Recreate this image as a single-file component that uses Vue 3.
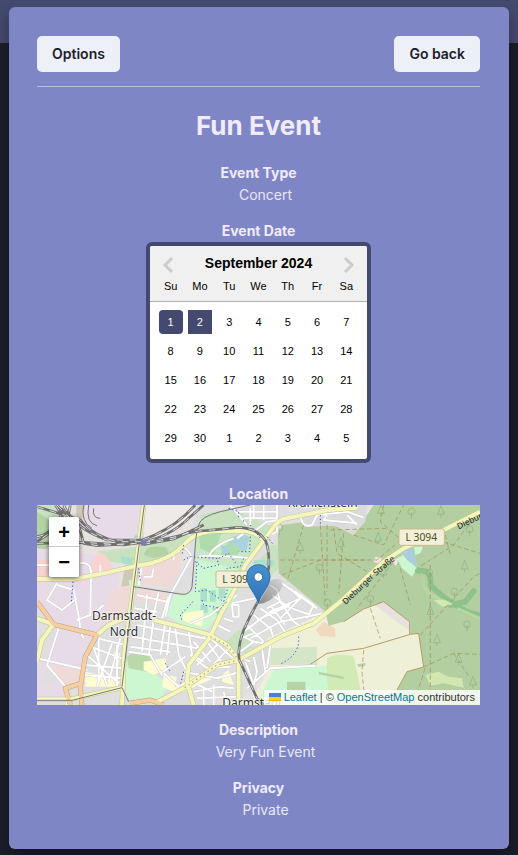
<script setup>
const weekdays = ['Su', 'Mo', 'Tu', 'We', 'Th', 'Fr', 'Sa']
const days = Array.from({ length: 35 }, (_, i) => ({
  n: i < 30 ? i + 1 : i - 29,
  start: i === 0,
  end: i === 1,
}))

// Map geometry lives on a 1329 x 600 plane.
const land = [
  { fill: '#e0dfdf', d: 'M262 240L390 250L450 170L480 0H960L960 90L870 60L800 70L720 60L722 200L870 320L690 400L700 480L600 600H0V300L200 330Z' },
  { fill: '#eeeae8', d: 'M325 0H480L440 60L380 95L320 110Z' },
  { fill: '#c8e2c0', d: 'M0 0H55L110 30V110H0ZM180 140L300 125L440 85L470 100L400 165L300 180L215 170Z' },
  { fill: '#b3d3a4', d: 'M0 20L60 60L50 110L0 160ZM330 130Q350 120 390 128L395 150L350 160L320 150Z' },
  { fill: '#cfc8b4', d: 'M118 0H150L140 50L118 40ZM265 180H305V250H252Z' },
  { fill: '#e8dbe8', d: 'M145 0H322L308 115H240L180 90L130 60ZM0 130L190 150L250 210L240 260L250 330L200 370L150 390L60 360L0 300Z' },
  { fill: '#e8dbe8', d: 'M60 370L175 390L145 440L135 530L80 520L30 490L0 560V470L20 465Z' },
  { fill: '#e8dbe8', d: 'M0 540L60 530L90 550V590H0Z' },
  { fill: '#f8d3d0', d: 'M0 165H35V220H130L180 218L225 205Q230 160 185 140L165 170L150 240L60 240L45 270L65 370L0 300Z' },
  { fill: '#e8dbe8', d: 'M50 180H150L160 210H50ZM10 230H160V340H130L60 360L0 290V235Z' },
  { fill: '#f0dad8', d: 'M225 250L285 240L265 340L190 360ZM310 180L435 135L430 200L400 250L300 230ZM30 480L130 490L130 535L80 540ZM300 245L395 268L390 300L300 290Z' },
  { fill: '#cdf7d0', d: 'M480 160L620 150L600 200L590 300L550 320L510 375L440 365L390 330L410 270L470 260Z' },
  { fill: '#c8e9c3', d: 'M480 80L640 70L700 100L610 195L470 160Z' },
  { fill: '#c8e2c0', d: 'M490 30L580 10L720 70L690 100L640 65L490 75ZM690 120H722L725 190L705 210L640 190L690 140ZM605 375L650 380L640 450L600 440L565 410Z' },
  { fill: '#aedcac', d: 'M485 90L555 80L530 150L490 130ZM580 100Q620 80 640 100L600 150H550ZM525 310L565 300L550 340Z' },
  { fill: '#cdf7d0', d: 'M275 450L330 440L345 500L400 540L370 580L270 580L262 500ZM275 225L305 228V250H280Z' },
  { fill: '#b9d9ab', d: 'M270 455Q300 430 340 455L360 475L330 500L275 490Z' },
  { fill: '#aae0cb', d: 'M490 250H510V290H490ZM518 256H536V290H518ZM545 250H565V280H545ZM490 300H512V325H490ZM650 165H710V185H650ZM250 152L290 160L280 180L255 175Z' },
  { fill: '#aad3df', d: 'M550 125Q565 115 578 130L570 146L555 142ZM583 100Q610 80 635 95L630 135L615 140L600 120L590 125ZM295 90L320 95L315 100L290 98Z' },
  { fill: '#fdfcd0', d: 'M440 325L500 315L495 365L460 355L435 345ZM320 470L385 460L390 490L350 510L320 495ZM380 510L420 515L410 560L375 545ZM145 500L190 510L250 530L240 545H145ZM755 395H785V425H755ZM560 505L575 495L590 540L555 530ZM230 440L250 445L245 485L228 480ZM400 555L470 515L530 520L440 560Z' },
  { fill: '#eef0d8', d: 'M690 400L870 320L1000 290L1120 380L1330 480V600H640L700 480Z' },
  { fill: '#dcdbdb', d: 'M640 430L695 410L700 485L640 560L610 470Z' },
  { fill: '#d5e5c8', d: 'M700 430L840 425V480H700Z' },
  { fill: '#cdf7d0', d: 'M715 490L900 482L940 510V600H660L690 530Z' },
  { fill: '#d2eab4', d: 'M870 460Q900 440 950 455L960 500L980 600H880L870 520Z' },
  { fill: '#b4d4a8', d: 'M845 500L920 515V523L845 508ZM750 530H805V558H750ZM760 565H860V575H760ZM960 478L985 474V482L965 486Z' },
  { fill: '#f1d9bf', d: 'M837 375L860 350L895 370V395L850 393Z' },
  { fill: '#b3cfa1', d: 'M1010 0H1329V600H990L1080 555L1110 500L1160 486L1145 385L1120 388V350L1040 290L980 312L920 350L875 362L865 320L725 205L722 90L735 60L800 52Q850 55 900 65L950 90Z' },
  { fill: '#dcdbdb', d: 'M790 30L850 0H990L985 50L950 88L900 62L800 65Z' },
  { fill: '#cdf7d0', d: 'M1080 160L1100 150L1140 190L1125 215L1095 190ZM1130 125L1158 125L1150 145L1135 150Z' },
  { fill: '#aacfda', d: 'M1090 140L1120 122L1135 150L1142 188L1110 165Z' },
  { fill: '#eee4e0', d: 'M1015 155L1035 160L1028 178L1010 170ZM1060 165L1085 160L1078 184Z' },
  { fill: '#d1e7af', d: 'M1165 510L1205 500L1235 515L1275 520L1280 548L1220 535L1180 542Z' },
]
const whiteRoads = [
  'M105 220V130M0 180H40M128 175Q160 170 162 200L160 330L120 345M60 235L30 285L75 315L120 280M62 240L110 255L125 335L130 370',
  'M65 370L30 480L90 550V600M0 460L150 495M190 215V180M200 300L165 330M128 375L140 400M180 400L265 420',
  'M315 180L305 240M350 190L345 215H320M410 165V140M430 120Q465 140 462 160L400 270L385 335',
  'M395 275L375 340M415 370L425 450L450 500M455 380L465 450L500 470M370 505L445 455M380 505L430 550M375 510L340 450L275 440M510 490L580 485',
  'M300 270L390 290M290 310L360 320M300 360L500 400M285 395L480 430M280 425L400 440M330 270L315 440M350 345L335 450M385 350L370 450M365 260L350 330M400 360L390 450',
  'M145 480L260 490M140 510L255 520M165 415L210 540M225 415L180 545M150 450L245 535M160 425L255 460M185 395V530M240 420V545M250 400L215 530',
  'M470 410L520 470M500 395L560 480M540 420L480 480M580 425L500 510M520 400L600 470M460 450L510 490M440 500L540 520L610 500M475 535L525 560',
  'M470 560L550 545L590 550M480 580L600 575M500 545V600M530 540V600M560 560L570 600M640 540L660 600',
  'M585 300H605V335H588ZM585 295L655 280M610 400L650 385M560 340L590 350M540 360L580 380',
  'M700 240L720 255L730 290L690 310M735 235L840 310M760 250L790 280L760 310M775 260L830 300L810 340M670 310L720 345L750 390M700 300L745 360M650 330L700 370L710 400M630 360L680 410M620 395L660 415M730 290L770 350L800 370M765 310L820 330M690 250L665 290M705 270L760 310L730 340M640 400L730 350L860 325M620 380L700 320L790 280M660 345L760 300',
  'M625 470L650 540M650 455L660 500L650 540M675 430L685 500M700 420L690 490M630 550L700 490L835 482M600 455L640 470M610 440L650 410L680 415',
  'M720 0V80L700 90M605 20H720M620 40H720M650 0V40M680 0V45M640 10V60M580 0L630 60M650 80L690 50L730 45',
  'M790 30Q795 70 825 60L840 30L930 20L980 38M870 30L860 45L960 55M930 30L960 60',
  'M480 155Q540 150 640 160M515 155Q530 120 590 100M620 85L600 100M460 355L520 330L600 270',
]
const yellowRoads = [
  'M0 222H110L200 205L300 182Q400 170 450 110Q480 80 540 78H610Q650 75 680 105',
  'M320 0L290 240L262 440L255 600',
  'M180 390L215 360L262 340M350 345L450 370L520 390L570 420L605 465V600',
  'M48 360L15 405L0 470M0 340L50 358',
  'M960 8L870 16L750 40Q725 40 700 80L625 180L590 260L555 320L520 395L455 480L450 530L470 600',
  'M1329 20L1220 75L1100 130L1040 170L910 290L830 355L730 395L605 465L540 480L440 550L360 592',
  'M0 583H100L255 548',
]
const orangeRoads = ['M0 290L50 358L180 390L145 455L130 545L135 600', 'M130 535L85 550L100 600', 'M280 595L340 585L380 600']
const rails = [
  'M55 0L75 30L110 50M0 5L130 45Q165 90 240 110H320Q400 95 460 35L500 0',
  'M80 0Q110 70 210 105H315Q390 80 445 30L475 0',
  'M0 115L140 112L260 120L370 105L430 92Q450 80 515 76L605 67Q665 70 687 110Q698 140 695 190L662 292Q640 330 620 375Q600 430 607 465L660 580L680 600',
  'M0 95Q40 90 70 35L85 0M60 0L120 60M100 0L90 50L0 110M125 60L140 115L180 122L290 115',
  'M320 118L410 102L500 60',
]
const thinRails = [
  'M640 0L550 20Q490 35 485 60Q478 80 475 120L465 245Q460 270 435 268L290 245',
  'M322 0L290 245L255 545M0 586H105L255 548L275 590',
  'M140 0Q130 50 165 70M155 0Q145 55 180 62M170 10Q165 40 190 40',
]
const waterDots = [
  'M440 165L460 155L540 160L545 180L500 190L475 170M640 95L638 140L605 140M575 10L605 20L605 40M480 170L475 260L510 255L560 290L575 240L570 190L610 185L620 160M545 160L575 145L600 180M468 290L430 330L435 345M495 285L500 300L550 310L570 290',
  'M785 395Q790 450 730 477M108 230L103 290M440 120L435 150M305 190L310 230M385 475L400 500M440 500L430 540M690 95L710 120M620 50V40M850 30V60M640 60L670 100',
]
const tracks = [
  'M735 210L850 165L1020 165L1120 80L1329 145M870 60V260M730 165H985M850 60L865 290M800 60L750 230M920 85L905 265M990 200L900 145L890 70M950 90L1040 120L1100 0M1040 0L1030 50L1110 120M880 75L1050 70',
  'M980 435L975 500L985 600M1000 310L1030 400M1180 180V600M1150 390L1310 215L1329 205M1160 486L1250 445L1329 448M1164 490L1130 600M1320 25L1250 120L1140 190M1090 190L1120 300M1070 170L960 310M1225 90L1240 150M1250 445L1300 520',
]
const paths = ['M820 478L870 445L980 430L1120 388L1145 385', 'M920 350L980 312L1040 290L1118 350V388M1145 385L1160 486L1110 500L1080 555']
const trees = [[1032, 15], [1212, 18], [1023, 98], [912, 115], [790, 127], [1040, 200], [1283, 182], [1180, 318], [1200, 403], [1265, 462], [1308, 530]]
const roundTrees = [[1123, 22], [1298, 75], [847, 190], [1000, 283], [1177, 205], [1252, 262], [1290, 360], [727, 70], [871, 295]]
</script>

<template>
  <div class="page">
    <main class="card">
      <header class="toolbar">
        <button type="button" class="btn">Options</button>
        <button type="button" class="btn">Go back</button>
      </header>
      <h1>Fun Event</h1>

      <section class="field">
        <h2>Event Type</h2>
        <p>Concert</p>
      </section>

      <section class="field date">
        <h2>Event Date</h2>
        <div class="calendar">
          <div class="cal-head">
            <div class="month">
              <button type="button" class="nav" aria-label="Previous month">
                <svg width="12" height="18" viewBox="0 0 12 18"><path d="M10 2L3 9L10 16" /></svg>
              </button>
              <strong>September 2024</strong>
              <button type="button" class="nav" aria-label="Next month">
                <svg width="12" height="18" viewBox="0 0 12 18"><path d="M2 2L9 9L2 16" /></svg>
              </button>
            </div>
            <div class="week">
              <span v-for="w in weekdays" :key="w">{{ w }}</span>
            </div>
          </div>
          <div class="days">
            <button v-for="(d, i) in days" :key="i" type="button" class="day" :class="{ start: d.start, end: d.end }">{{ d.n }}</button>
          </div>
        </div>
      </section>

      <section class="field location">
        <h2>Location</h2>
        <div class="map">
          <svg class="tiles" viewBox="0 0 1329 600" preserveAspectRatio="xMidYMid slice">
            <rect width="1329" height="600" fill="#e6e2e0" />
            <path v-for="a in land" :key="a.d" :d="a.d" :fill="a.fill" />
            <path d="M1142 198Q1185 190 1180 240Q1215 275 1255 300Q1290 325 1329 330M1310 258L1285 290L1240 300" fill="none" stroke="#8fc18a" stroke-width="17" stroke-linecap="round" />
            <path d="M1158 215Q1155 260 1190 275L1245 298M1260 310L1329 340" fill="none" stroke="#b5d7a0" stroke-width="9" />
            <path d="M1190 285Q1230 280 1245 298L1215 305Z" fill="#cfeab2" />

            <g fill="none" stroke-linejoin="round">
              <path v-for="d in tracks" :key="d" :d="d" stroke="#a8894f" stroke-width="2" stroke-dasharray="14 8" />
              <path v-for="d in paths" :key="d" :d="d" stroke="#b99a62" stroke-width="3" />
              <g stroke="#8fae80" stroke-width="2">
                <path v-for="[x, y] in trees" :key="`${x}-${y}`" :d="`M${x} ${y - 16}L${x + 10} ${y + 10}H${x - 10}ZM${x} ${y + 10}V${y + 20}`" />
                <g v-for="[x, y] in roundTrees" :key="`${x}-${y}`">
                  <circle :cx="x" :cy="y - 2" r="10" /><path :d="`M${x} ${y}V${y + 20}`" />
                </g>
              </g>
              <path v-for="d in whiteRoads" :key="d" :d="d" stroke="#c9c7c8" stroke-width="8" />
              <path v-for="d in whiteRoads" :key="`f${d}`" :d="d" stroke="#ffffff" stroke-width="6" />
              <path v-for="d in yellowRoads" :key="d" :d="d" stroke="#c3c493" stroke-width="15" />
              <path v-for="d in orangeRoads" :key="d" :d="d" stroke="#cca06d" stroke-width="15" />
              <path v-for="d in yellowRoads" :key="`f${d}`" :d="d" stroke="#f5f6bb" stroke-width="12" />
              <path v-for="d in orangeRoads" :key="`f${d}`" :d="d" stroke="#f2cfa5" stroke-width="12" />
              <path v-for="d in thinRails" :key="d" :d="d" stroke="#777777" stroke-width="3" />
              <path v-for="d in rails" :key="d" :d="d" stroke="#707070" stroke-width="8" />
              <path v-for="d in rails" :key="`f${d}`" :d="d" stroke="#dddddd" stroke-width="3" stroke-dasharray="20 20" />
              <path v-for="d in waterDots" :key="d" :d="d" stroke="#3c49e8" stroke-width="3" stroke-dasharray="4 7" />
              <path d="M520 395L570 420L605 465L540 480L440 550" stroke="#c59d8c" stroke-width="4" stroke-dasharray="4 10" />
            </g>
            <rect x="311" y="104" width="18" height="18" fill="#7b7bb5" />

            <g class="shield">
              <rect x="1086" y="72" width="136" height="49" rx="6" /><text x="1153" y="109">L 3094</text>
              <rect x="537" y="198" width="136" height="49" rx="6" /><text x="603" y="234">L 3094</text>
            </g>
            <g class="place">
              <text x="261" y="346">Darmstadt-</text>
              <text x="261" y="392">Nord</text>
              <text x="857" y="6">Kranichstein</text>
              <text x="646" y="605">Darmstadt</text>
            </g>
            <path id="street" d="M922 296L1004 216L1090 144" fill="none" />
            <path id="street-east" d="M1263 68L1410 -4" fill="none" />
            <g class="street">
              <text><textPath href="#street">Dieburger Straße</textPath></text>
              <text><textPath href="#street-east">Dieburger</textPath></text>
            </g>

            <defs>
              <linearGradient id="shade" x1="0" y1="1" x2="1" y2="0">
                <stop offset="0" stop-color="#333" stop-opacity=".5" /><stop offset="1" stop-color="#333" stop-opacity=".05" />
              </linearGradient>
              <linearGradient id="pin" x1="0" y1="0" x2="0" y2="1">
                <stop offset="0" stop-color="#4a90cf" /><stop offset="1" stop-color="#2f73b7" />
              </linearGradient>
            </defs>
            <path d="M664 296L698 228Q735 210 738 240Q725 275 680 295Z" fill="url(#shade)" />
            <path d="M664 295C660 270 629 245 629 214A35 35 0 0 1 699 214C699 245 669 270 664 295Z" fill="url(#pin)" stroke="#2e6c9f" stroke-width="3" />
            <circle cx="664" cy="216" r="13" fill="#fff" stroke="#2e6c9f" stroke-width="3" />
          </svg>

          <div class="zoom">
            <button type="button" aria-label="Zoom in">+</button>
            <button type="button" aria-label="Zoom out">−</button>
          </div>
          <div class="credit">
            <a href="#leaflet"><svg width="12" height="8" viewBox="0 0 12 8"><path fill="#4c7be1" d="M0 0h12v4H0z" /><path fill="#ffd500" d="M0 4h12v3H0z" /><path fill="#e0bc00" d="M0 7h12v1H0z" /></svg> Leaflet</a>
            | © <a href="#osm">OpenStreetMap</a> contributors
          </div>
        </div>
      </section>

      <section class="field">
        <h2>Description</h2>
        <p>Very Fun Event</p>
      </section>
      <section class="field">
        <h2>Privacy</h2>
        <p>Private</p>
      </section>
    </main>
  </div>
</template>

<style>
body {
  margin: 0;
  background: #1b1d29;
}
</style>

<style scoped>
.page {
  box-sizing: border-box;
  min-height: 100vh;
  padding: 7px 9px 6px;
  background: linear-gradient(#44496f 43px, #1b1d29 43px);
  font-family: Inter, "Liberation Sans", sans-serif;
  color: #f1ebfc;
}
.card {
  box-sizing: border-box;
  padding: 29px 29px 14px 28px;
  border-radius: 6px;
  background: #7e86c6;
  box-shadow: 0 8px 16px rgba(0, 0, 0, 0.3);
}
.toolbar {
  display: flex;
  justify-content: space-between;
  padding-bottom: 14px;
  border-bottom: 1px solid #babfd9;
}
.btn {
  height: 36px;
  padding: 0 15px;
  border: 0;
  border-radius: 5px;
  background: #edf0f7;
  color: #1a202c;
  font: 600 14px/20px Inter, sans-serif;
}
h1 {
  margin: 19px 0 17px;
  font-size: 26px;
  line-height: 39px;
  text-align: center;
}
.field {
  margin-bottom: 14px;
  text-align: center;
}
.date {
  margin-bottom: 20px;
}
h2, p {
  margin: 0;
  font-size: 14px;
  line-height: 22px;
}
h2 {
  font-weight: 700;
}
p {
  padding-left: 14px;
  color: #e9e6fa;
}
.calendar {
  box-sizing: border-box;
  width: 225px;
  margin: 0 auto;
  border: 4px solid #444970;
  border-radius: 6px;
  background: #fff;
  color: #000;
  font: 11px/14px "Liberation Sans", sans-serif;
}
.cal-head {
  padding: 8px 6px 8px;
  border-bottom: 1px solid #aeaeae;
  border-radius: 3px 3px 0 0;
  background: #f0f0f0;
}
.month {
  display: flex;
  align-items: center;
  justify-content: space-between;
  height: 20px;
  padding: 0 6px;
  font-size: 14px;
}
.month strong {
  padding-bottom: 2px;
}
.nav {
  display: flex;
  padding: 2px 0 0;
  border: 0;
  background: none;
}
.nav path {
  fill: none;
  stroke: #ccc;
  stroke-width: 3;
}
.week, .days {
  display: grid;
  grid-template-columns: repeat(7, 1fr);
  place-items: center;
}
.week {
  padding-top: 5px;
}
.days {
  grid-auto-rows: 29px;
  padding: 5px 6px 7px;
}
.day {
  width: 24px;
  height: 24px;
  padding: 0;
  border: 0;
  background: none;
  color: #000;
  font: inherit;
}
.start, .end {
  background: #444970;
  color: #fff;
}
.start {
  border-radius: 4px;
}
.map {
  position: relative;
  height: 200px;
  overflow: hidden;
  font-family: "Liberation Sans", sans-serif;
}
.tiles {
  display: block;
  width: 100%;
  height: 100%;
}
.shield rect {
  fill: #f2f0d8;
  stroke: #c8bd90;
  stroke-width: 3px;
}
.shield text {
  fill: #4d4d18;
  font: 31px "Noto Sans", sans-serif;
  text-anchor: middle;
}
.place text {
  fill: #333;
  stroke: rgba(255, 255, 255, 0.6);
  stroke-width: 6px;
  paint-order: stroke;
  font: 36px "Noto Sans", sans-serif;
  text-anchor: middle;
}
.street text {
  fill: #222;
  font: 25px "Noto Sans", sans-serif;
  dominant-baseline: middle;
}
.zoom {
  position: absolute;
  top: 12px;
  left: 12px;
  border-radius: 2px;
  box-shadow: 0 1px 5px rgba(0, 0, 0, 0.65);
}
.zoom button {
  display: block;
  width: 30px;
  height: 30px;
  padding: 0;
  border: 0;
  border-radius: 0 0 2px 2px;
  background: #fff;
  color: #000;
  font: bold 20px/28px "Liberation Sans", sans-serif;
}
.zoom button:first-child {
  border-bottom: 1px solid #ccc;
  border-radius: 2px 2px 0 0;
}
.credit {
  position: absolute;
  right: 0;
  bottom: 0;
  padding: 0 5px;
  background: rgba(255, 255, 255, 0.8);
  color: #333;
  font-size: 11px;
  line-height: 15px;
  white-space: nowrap;
}
.credit a {
  color: #0078a8;
  text-decoration: none;
}
</style>
